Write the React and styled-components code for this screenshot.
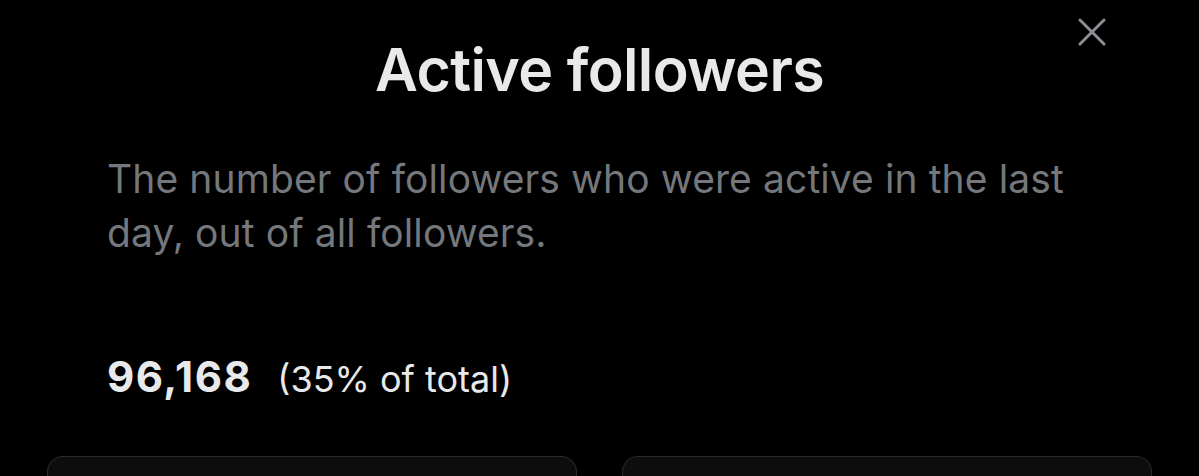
import React from "react";
import styled, { createGlobalStyle } from "styled-components";

const Global = createGlobalStyle`
  html, body { margin: 0; padding: 0; background: #000; }
  body { font-family: Inter, "Liberation Sans", Arial, sans-serif; -webkit-font-smoothing: antialiased; }
`;

const Sheet = styled.div`
  width: 1199px;
  height: 476px;
  overflow: hidden;
  background: #000;
  box-sizing: border-box;
  padding: 0 47px;
  display: flex;
  flex-direction: column;
`;

const Header = styled.div`
  display: grid;
  grid-template-columns: 1fr auto 1fr;
  align-items: start;
  padding-top: 34px;
`;

const Title = styled.h1`
  grid-column: 2;
  margin: 0;
  color: #e7e9ea;
  font-size: 59px;
  font-weight: 600;
  line-height: 72px;
  letter-spacing: -0.6px;
  white-space: nowrap;
`;

const Close = styled.button`
  grid-column: 3;
  justify-self: end;
  margin: -20px 42px 0 0;
  width: 36px;
  height: 36px;
  padding: 0;
  border: 0;
  background: transparent;
  display: flex;
  align-items: center;
  justify-content: center;
  cursor: pointer;
`;

const Description = styled.p`
  margin: 46px 0 0 60px;
  color: #74787c;
  font-size: 39px;
  line-height: 54px;
  font-weight: 400;
  letter-spacing: 0.1px;
  max-width: 990px;
`;

const StatRow = styled.div`
  display: flex;
  align-items: baseline;
  gap: 25px;
  margin: 91px 0 0 60px;
  line-height: 52px;
`;

const StatValue = styled.span`
  color: #e7e9ea;
  font-size: 42px;
  font-weight: 700;
  letter-spacing: 1.5px;
`;

const StatShare = styled.span`
  color: #e7e9ea;
  font-size: 36px;
  font-weight: 400;
`;

const Cards = styled.div`
  display: grid;
  grid-template-columns: 1fr 1fr;
  gap: 45px;
  margin-top: auto;
  height: 20px;
`;

const Card = styled.div`
  background: #0d0d0d;
  border: 1px solid #2a2a2a;
  border-bottom: 0;
  border-radius: 16px 16px 0 0;
`;

export default function App() {
  return (
    <>
      <Global />
      <Sheet>
        <Header>
          <Title>Active followers</Title>
          <Close aria-label="Close">
            <svg width="28" height="28" viewBox="0 0 28 28">
              <path d="M2 2 L26 26 M26 2 L2 26" stroke="#8b8f93" strokeWidth="3" strokeLinecap="round" />
            </svg>
          </Close>
        </Header>
        <Description>
          The number of followers who were active in the last day, out of all followers.
        </Description>
        <StatRow>
          <StatValue>96,168</StatValue>
          <StatShare>(35% of total)</StatShare>
        </StatRow>
        <Cards>
          <Card />
          <Card />
        </Cards>
      </Sheet>
    </>
  );
}
